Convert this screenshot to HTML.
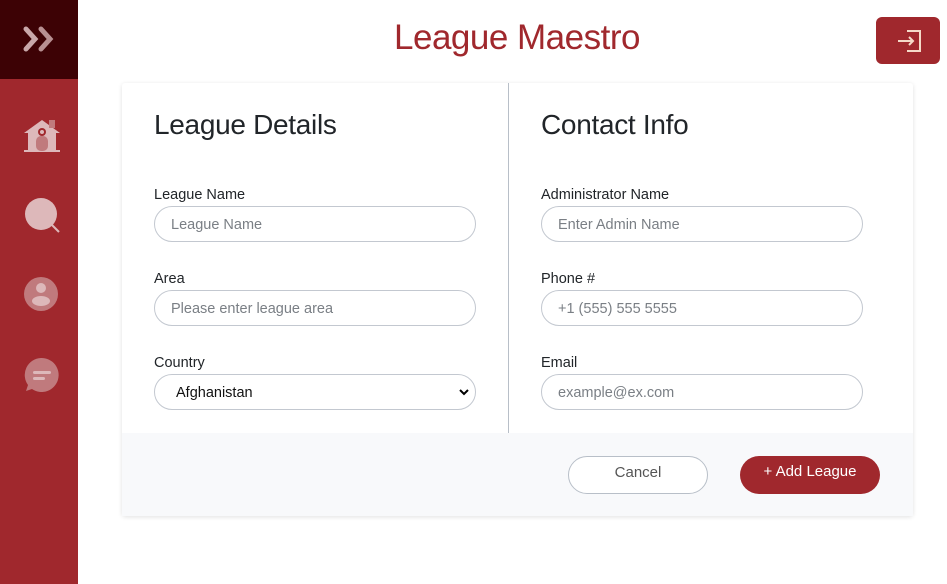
<!DOCTYPE html>
<html><head><style>
body{margin:0;width:947px;height:584px;background:#fff;font-family:"Liberation Sans",sans-serif;position:relative;overflow:hidden;color:#212529}
.sb{position:absolute;left:0;top:0;width:78px;height:584px;background:#a0282d}
.sbt{position:absolute;left:0;top:0;width:78px;height:79px;background:#3d0205}
.ic{position:absolute;left:22px}
h1{position:absolute;left:0;width:1034px;text-align:center;top:18px;margin:0;font-weight:normal;font-size:35px;color:#a0282d;letter-spacing:-0.5px}
.lo{position:absolute;left:876px;top:17px;width:64px;height:47px;background:#a0282d;border-radius:6px}
.card{position:absolute;left:122px;top:83px;width:791px;height:433px;background:#fff;box-shadow:0 1px 5px rgba(0,0,0,.12);border-radius:3px}
.div{position:absolute;left:386px;top:0;width:1px;height:350px;background:#b8bfc8}
.foot{position:absolute;left:0;top:350px;width:791px;height:83px;background:#f8f9fb}
h2{position:absolute;margin:0;font-weight:normal;font-size:28px;top:26px;letter-spacing:-0.3px}
.l{position:absolute;font-size:14.5px;color:#212529}
.in{position:absolute;border:1px solid #c3c8d0;border-radius:18px;font-size:14.5px;color:#7a7f85;line-height:37px;padding-left:16px;box-sizing:border-box;width:322px;height:36px}
.btn{position:absolute;top:373px;width:140px;height:38px;border-radius:19px;box-sizing:border-box;text-align:center;line-height:32px;font-size:15px}
</style></head><body>
<div class="sb"></div><div class="sbt"></div>
<svg class="ic" style="top:25px" width="38" height="28" viewBox="0 0 38 28"><path d="M4 4l9 10-9 10" stroke="#c9a8aa" stroke-width="5" fill="none" stroke-linecap="round"/><path d="M19 4l9 10-9 10" stroke="#b89092" stroke-width="5" fill="none" stroke-linecap="round"/></svg>
<svg class="ic" style="top:118px" width="40" height="36" viewBox="0 0 40 36"><path d="M2 15L20 2 38 15z" fill="#ddb8ba"/><rect x="27" y="2" width="6" height="8" fill="#c07a7d"/><rect x="6" y="14" width="28" height="19" fill="#ddb8ba"/><rect x="2" y="32" width="36" height="2" fill="#ddb8ba"/><rect x="14" y="18" width="12" height="15" rx="5" fill="#c07a7d"/><circle cx="20" cy="14" r="4" fill="#a0282d"/><circle cx="20" cy="14" r="2" fill="#ddb8ba"/></svg>
<svg class="ic" style="top:196px" width="40" height="38" viewBox="0 0 40 38"><circle cx="19" cy="18" r="16" fill="#ddb8ba"/><path d="M29 28l8 8" stroke="#ddb8ba" stroke-width="2"/></svg>
<svg class="ic" style="top:276px" width="40" height="38" viewBox="0 0 40 38"><circle cx="19" cy="18" r="17" fill="#c07a7d"/><circle cx="19" cy="12" r="5" fill="#ddb8ba"/><ellipse cx="19" cy="25" rx="9" ry="5" fill="#ddb8ba"/></svg>
<svg class="ic" style="top:356px" width="40" height="38" viewBox="0 0 40 38"><path d="M19 2a17 17 0 1 1-9 31l-6 2 2-6A17 17 0 0 1 19 2z" fill="#c07a7d"/><rect x="11" y="15" width="18" height="3" rx="1.5" fill="#ddb8ba"/><rect x="11" y="21" width="12" height="3" rx="1.5" fill="#ddb8ba"/></svg>
<h1>League Maestro</h1>
<div class="lo"><svg width="64" height="47" viewBox="0 0 64 47"><path d="M31 14h13v20H31" stroke="#f5d9c8" stroke-width="2" fill="none"/><path d="M22 24h15M33 20l4 4-4 4" stroke="#f5d9c8" stroke-width="2" fill="none"/></svg></div>
<div class="card">
<div class="div"></div><div class="foot"></div>
<h2 style="left:32px">League Details</h2>
<h2 style="left:419px">Contact Info</h2>
<div class="l" style="left:32px;top:104px">League Name</div>
<div class="in" style="left:32px;top:123px">League Name</div>
<div class="l" style="left:32px;top:188px">Area</div>
<div class="in" style="left:32px;top:207px">Please enter league area</div>
<div class="l" style="left:32px;top:272px">Country</div>
<div class="in" style="left:32px;top:291px;color:#111;padding-left:21px">Afghanistan<svg style="position:absolute;right:6px;top:13px" width="10" height="8" viewBox="0 0 10 8"><path d="M1 2l4 4 4-4" stroke="#000" stroke-width="2" fill="none"/></svg></div>
<div class="l" style="left:419px;top:104px">Administrator Name</div>
<div class="in" style="left:419px;top:123px">Enter Admin Name</div>
<div class="l" style="left:419px;top:188px">Phone #</div>
<div class="in" style="left:419px;top:207px">+1 (555) 555 5555</div>
<div class="l" style="left:419px;top:272px">Email</div>
<div class="in" style="left:419px;top:291px">example@ex.com</div>
<div class="btn" style="left:446px;border:1px solid #b8bfc8;background:#fff;color:#555">Cancel</div>
<div class="btn" style="left:618px;background:#a0282d;color:#fff">+ Add League</div>
</div>
</body></html>
